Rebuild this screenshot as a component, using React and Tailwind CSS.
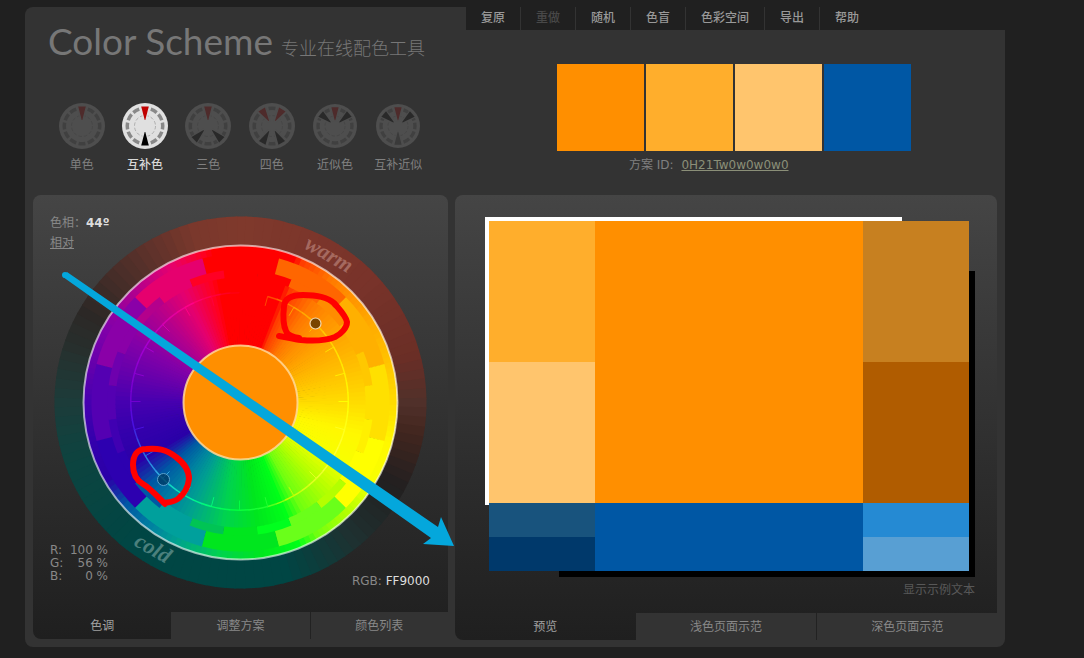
import { useState } from 'react'
import clsx from 'clsx'

const MENU = ['复原', '重做', '随机', '色盲', '色彩空间', '导出', '帮助']

// tone: r = red wedge, k = dark wedge, g = faint wedge
const SCHEMES = [
  { name: '单色', r: 23, wedges: [[0, 'r']] },
  { name: '互补色', r: 23, wedges: [[0, 'r'], [180, 'k']] },
  { name: '三色', r: 23, wedges: [[0, 'r'], [135, 'k'], [225, 'k']] },
  { name: '四色', r: 23, wedges: [[-32, 'r'], [32, 'r'], [150, 'k'], [210, 'k']] },
  { name: '近似色', r: 22, wedges: [[0, 'r'], [50, 'k'], [-50, 'k']] },
  { name: '互补近似', r: 22, wedges: [[0, 'r'], [50, 'k'], [-50, 'k'], [180, 'g']] },
]

const DIM = { disc: '#4e4e4e', dash: '#404040', r: '#4e2b2b', k: '#292929', g: '#3a3a3a' }
const LIT = { disc: '#e0e0e0', dash: '#888888', r: '#c00000', k: '#000000', g: '#888888' }

// clockwise from the top, in degrees
const BLOCKS = [
  [0, 'ff0000'], [30, 'ff6600'], [60, 'ffb000'], [90, 'ffe000'], [120, 'ffff00'], [150, '6aff1a'],
  [180, '00e61e'], [210, '00a09c'], [240, '2d00b0'], [270, '5400b2'], [300, '8a00a8'], [330, 'e6006e'], [360, 'ff0000'],
]
const HALF_BLOCKS = [
  [0, 'ff0000'], [15, 'ff0000'], [30, 'ff6600'], [45, 'ff8c00'], [60, 'ffb000'], [75, 'ffc800'], [90, 'ffe000'],
  [105, 'fff000'], [120, 'ffff00'], [135, 'b4ff00'], [150, '6aff1a'], [165, '00ff1e'], [180, '00e61e'], [195, '00c454'],
  [210, '00a09c'], [225, '0058a4'], [240, '2d00b0'], [255, '4000b2'], [270, '5400b2'], [285, '6e00ae'], [300, '8a00a8'],
  [315, 'b4008c'], [330, 'e6006e'], [345, 'ff0024'], [360, 'ff0000'],
]
const SMOOTH = [
  [0, 'ff0000'], [21, 'ff0000'], [23, 'ff3800'], [36, 'ff7800'], [45, 'ff9000'], [60, 'ffac00'], [75, 'ffc400'], [90, 'ffdc00'],
  [105, 'fff800'], [120, 'f8ff00'], [135, 'b8ff00'], [150, '70ff10'], [158, '00ff18'], [172, '00e61e'],
  [188, '00d250'], [205, '00a090'], [215, '0084a0'], [228, '0058a4'], [240, '2a00a8'], [255, '3400ac'], [270, '4600b0'],
  [285, '6600ac'], [300, '8400a8'], [318, 'b4008c'], [333, 'e6006e'], [346, 'ff0020'], [350, 'ff0000'], [360, 'ff0000'],
]
const LINE = [
  [0, 'ff0000'], [12, 'ff0000'], [15, 'ff4800'], [30, 'ffa000'], [60, 'ffe000'], [90, 'ffff00'], [120, 'ffff40'], [150, 'c0ff00'],
  [165, '20ff30'], [180, '00ff40'], [210, '00f0b0'], [225, '30a8e0'], [240, '2468e0'], [255, '4a10e0'],
  [270, '7000d0'], [300, 'a800d0'], [330, 'ff0088'], [350, 'ff0020'], [360, 'ff0000'],
]
const TEMPERATURE = [
  [0, '7f392c'], [45, '79332a'], [75, '6a2e26'], [90, '50302a'], [100, '42261f'], [118, '222020'], [140, '1f3030'], [165, '004644'],
  [215, '004644'], [250, '0c4440'], [270, '1c3c3a'], [290, '282e2c'], [300, '2c2826'], [325, '57302a'], [345, '7a382c'], [360, '7f392c'],
]

function colorAt(stops, deg) {
  const d = ((deg % 360) + 360) % 360
  const i = stops.findIndex(s => s[0] > d)
  const [a, ca] = stops[i - 1]
  const [b, cb] = stops[i]
  const t = (d - a) / (b - a)
  const ch = [0, 2, 4].map(k => {
    const x = parseInt(ca.slice(k, k + 2), 16)
    const y = parseInt(cb.slice(k, k + 2), 16)
    return Math.round(x + (y - x) * t)
  })
  return `rgb(${ch.join(',')})`
}

function polar(r, deg) {
  const a = (deg * Math.PI) / 180
  return `${(r * Math.sin(a)).toFixed(2)} ${(-r * Math.cos(a)).toFixed(2)}`
}

function sector(r0, r1, a0, a1) {
  return `M${polar(r1, a0)}A${r1} ${r1} 0 0 1 ${polar(r1, a1)}L${polar(r0, a1)}A${r0} ${r0} 0 0 0 ${polar(r0, a0)}Z`
}

// Rings are painted from the outside in, each one reaching under the next
function Ring({ stops, r0, r1, step }) {
  const over = step < 5 ? 0.5 : 0.2
  return Array.from({ length: 360 / step }, (_, i) => (
    <path key={i} d={sector(r0 - 3, r1, i * step - step / 2, i * step + step / 2 + over)} fill={colorAt(stops, i * step)} />
  ))
}

function SchemeIcon({ r, wedges, active }) {
  const c = active ? LIT : DIM
  return (
    <svg viewBox="-23 -23 46 46" className="size-[46px]" aria-hidden="true">
      <g transform={`scale(${r / 23})`}>
        <circle r="23" fill={c.disc} />
        {Array.from({ length: 12 }, (_, i) => (
          <path key={i} d={sector(16, 19.5, i * 30 - 11, i * 30 + 11)} fill={c.dash} />
        ))}
        <circle r="10.5" fill="none" stroke={c.dash} strokeWidth="0.8" strokeDasharray="3.5 2" opacity="0.7" />
        {wedges.map(([deg, tone]) => (
          <g key={deg} transform={`rotate(${deg})`}>
            <path d="M-5 -20.2H5L1.5 -5H-1.5Z" fill={c.disc} />
            <path d="M-3.8 -19.5H3.8L0.3 -6H-0.3Z" fill={c[tone]} />
          </g>
        ))}
      </g>
    </svg>
  )
}

function Wheel() {
  return (
    <svg viewBox="-187.5 -187.5 375 375" className="mx-auto block size-[375px]" role="img" aria-label="warm cold">
      <Ring stops={TEMPERATURE} r0={156} r1={186} step={3} />
      <Ring stops={SMOOTH} r0={149} r1={157} step={2} />
      <Ring stops={BLOCKS} r0={133} r1={149} step={30} />
      <Ring stops={HALF_BLOCKS} r0={125} r1={133} step={15} />
      <Ring stops={SMOOTH} r0={56} r1={125} step={2} />
      <g transform="translate(-1 -1)">
        {Array.from({ length: 72 }, (_, i) => (
          <path key={i} d={sector(108, 109.5, i * 5, i * 5 + 5.3)} fill={colorAt(LINE, i * 5)} />
        ))}
        {Array.from({ length: 24 }, (_, i) => (
          <path key={i} d={`M${polar(99, i * 15)}L${polar(109, i * 15)}`} stroke={colorAt(LINE, i * 15)} />
        ))}
      </g>
      <circle r="157" fill="none" stroke="#fff" strokeOpacity="0.6" strokeWidth="2" />
      <circle r="57" fill="#ff8f00" stroke="#ffd89a" strokeOpacity="0.85" strokeWidth="2" />
      <g fontFamily="'Liberation Serif', serif" fontStyle="italic" fontWeight="bold" fontSize="22" textAnchor="middle">
        <text transform="translate(85 -142) rotate(30)" fill="#a5695f">warm</text>
        <text transform="translate(-91 152) rotate(30)" fill="#4b807d">cold</text>
      </g>
      <circle cx="75" cy="-79" r="5.5" fill="#7a4500" stroke="#f3d9b0" strokeWidth="1.2" />
      <circle cx="-77" cy="77" r="6" fill="#003c66" fillOpacity="0.8" stroke="#5aa0cc" strokeWidth="1" />
    </svg>
  )
}

function Annotations() {
  return (
    <svg viewBox="33 195 415 417" className="pointer-events-none absolute top-0 left-0 z-10 h-[417px] w-[415px] overflow-visible" aria-hidden="true">
      <g fill="none" stroke="#ff0000" strokeWidth="6" strokeLinecap="round" strokeLinejoin="round">
        <path d="M279 336C286 337 293 339 301 340C312 341 325 341 335 337C341 334 347 328 347 322C346 316 339 309 334 303C326 296 314 295 303 295C294 295 285 297 284 306C283 315 283 325 286 331C288 336 293 337 299 338" />
        <path d="M165 504C158 497 150 488 143 484C136 480 133 473 133 465C133 456 137 449 146 449C157 448 166 449 176 457C184 463 189 470 189 479C188 487 184 494 179 498C175 502 169 502 164 503" />
      </g>
      <path d="M67 272L438 527L441 517L454 546L423 544L431 538L63 277Z" fill="#04a7dc" />
      <circle cx="65" cy="275" r="3" fill="#04a7dc" />
    </svg>
  )
}

function Tabs({ items }) {
  const [active, setActive] = useState(0)
  return (
    <div className="grid grid-cols-3 text-[#888888]" role="tablist">
      {items.map((label, i) => (
        <button key={label} type="button" role="tab" aria-selected={i === active} onClick={() => setActive(i)}
          className={clsx('h-[27px] text-center', i === active ? 'text-[#a0a0a0]' : 'bg-[#333333]',
            i === 2 && 'border-l border-[#222222]')}>
          {label}
        </button>
      ))}
    </div>
  )
}

function Header() {
  const [scheme, setScheme] = useState(1)
  return (
    <header className="flex">
      <div className="w-[441px] shrink-0 rounded-tl-lg bg-[#333333] pl-[23px]">
        <div className="flex items-baseline gap-2 pt-[11px] text-[#777777]">
          <h1 className="font-[family-name:Lato,sans-serif] text-[37px] leading-[46px]">Color Scheme</h1>
          <p className="text-[18px] font-light">专业在线配色工具</p>
        </div>
        <div className="mt-[39px] ml-[2px] grid w-[380px] grid-cols-6">
          {SCHEMES.map((s, i) => (
            <button key={s.name} type="button" onClick={() => setScheme(i)}
              className={clsx('flex flex-col items-center gap-[7px]', i === scheme ? 'font-medium text-[#d8d8d8]' : 'text-[#808080]')}>
              <SchemeIcon r={s.r} wedges={s.wedges} active={i === scheme} />
              {s.name}
            </button>
          ))}
        </div>
      </div>
      <div className="flex-1">
        <nav className="flex h-[23px] items-stretch">
          {MENU.map((m, i) => (
            <button key={m} type="button" disabled={i === 1}
              className="border-r border-[#333333] px-[15px] pb-[2px] font-medium text-[#999999] last:border-r-0 disabled:text-[#484848]">
              {m}
            </button>
          ))}
        </nav>
        <div className="h-[165px] bg-[#333333] pt-[34px] pr-[3px]">
          <div className="mx-auto w-fit">
            <div className="flex gap-[2px]">
              <div className="size-[87px] bg-[#ff8f00]" />
              <div className="size-[87px] bg-[#ffae2c]" />
              <div className="size-[87px] bg-[#ffc56d]" />
              <div className="size-[87px] bg-[#0057a4]" />
            </div>
            <p className="mt-[5px] ml-[72px] text-[#808080]">
              方案 ID: <a href="#scheme" className="ml-1 text-[#8b8f78] underline">0H21Tw0w0w0w0</a>
            </p>
          </div>
        </div>
      </div>
    </header>
  )
}

const RGB = [['R', 100], ['G', 56], ['B', 0]]

function HuePanel() {
  return (
    <section className="relative rounded-t-lg rounded-bl-lg bg-linear-to-b from-[#454545] to-[#1f1f1f]">
      <Annotations />
      <div className="pt-5 pb-[22px]">
        <Wheel />
      </div>
      <div className="absolute top-[18px] left-[17px] leading-[20px] text-[#888888]">
        <p>色相：<b className="text-[#dddddd]">44º</b></p>
        <a href="#relative" className="underline">相对</a>
      </div>
      <dl className="absolute top-[349px] left-[17px] w-[58px] leading-[13px] text-[#888888]">
        {RGB.map(([k, v]) => (
          <div key={k} className="flex justify-between">
            <dt>{k}:</dt>
            <dd>{v} %</dd>
          </div>
        ))}
      </dl>
      <p className="absolute top-[376px] right-[18px] leading-[20px] text-[#888888]">
        RGB: <span className="text-[#dddddd]">FF9000</span>
      </p>
      <Tabs items={['色调', '调整方案', '颜色列表']} />
    </section>
  )
}

function PreviewPanel() {
  return (
    <section className="rounded-t-lg rounded-bl-lg bg-linear-to-b from-[#454545] to-[#1f1f1f]">
      <div className="pt-[26px] pr-[28px] pb-[14px] pl-[34px]">
        <div className="relative">
          <div className="absolute -top-1 -left-1 h-[288px] w-[417px] bg-white" />
          <div className="absolute -right-[6px] -bottom-[6px] h-[306px] w-[416px] bg-black" />
          <div className="relative grid grid-cols-[106fr_268fr_106fr]">
            <div>
              <div className="h-[141px] bg-[#ffae2c]" />
              <div className="h-[141px] bg-[#ffc56d]" />
              <div className="h-[34px] bg-[#18537d]" />
              <div className="h-[34px] bg-[#00396b]" />
            </div>
            <div>
              <div className="h-[282px] bg-[#ff8f00]" />
              <div className="h-[68px] bg-[#0057a4]" />
            </div>
            <div>
              <div className="h-[141px] bg-[#c78020]" />
              <div className="h-[141px] bg-[#b05c00]" />
              <div className="h-[34px] bg-[#258ad3]" />
              <div className="h-[34px] bg-[#589fd3]" />
            </div>
          </div>
        </div>
        <button type="button" className="-mr-[6px] mt-[10px] ml-auto block text-[#585858]">显示示例文本</button>
      </div>
      <Tabs items={['预览', '浅色页面示范', '深色页面示范']} />
    </section>
  )
}

export default function App() {
  return (
    <div className="min-h-screen bg-[#202020] px-[25px] py-[7px] font-['DejaVu_Sans','Noto_Sans_CJK_SC',sans-serif] text-xs leading-[18px]">
      <div className="w-full max-w-[980px]">
        <Header />
        <main className="grid grid-cols-[415fr_542fr] items-start gap-[7px] rounded-b-lg bg-[#333333] px-2 pb-[7px]">
          <HuePanel />
          <PreviewPanel />
        </main>
      </div>
    </div>
  )
}
